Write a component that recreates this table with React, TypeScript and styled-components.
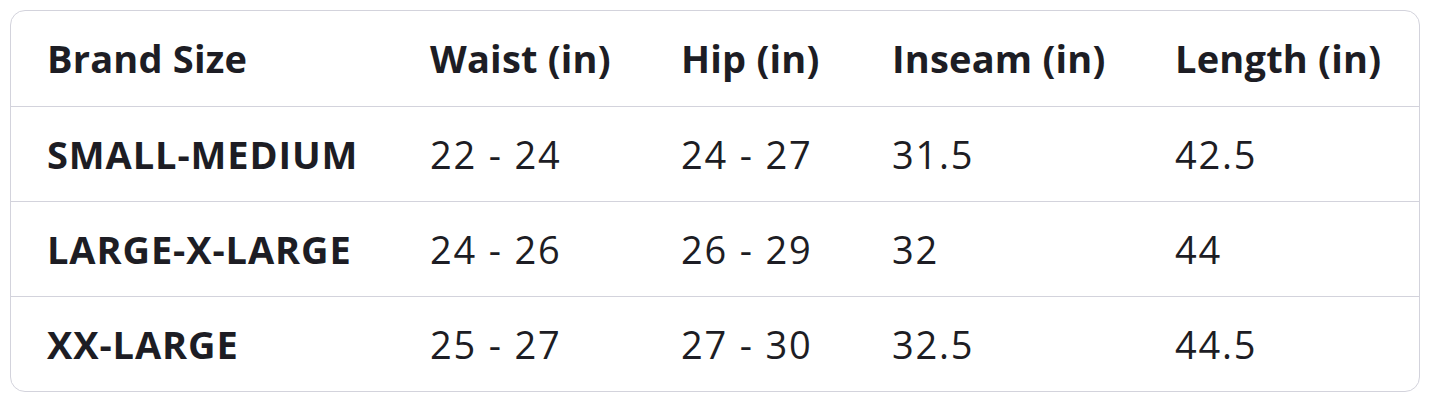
import styled, { createGlobalStyle } from "styled-components"

const GlobalStyle = createGlobalStyle`
    html, body {
        margin: 0;
        padding: 0;
        background: #ffffff;
    }
    body {
        font-family: "Open Sans", "Noto Sans", sans-serif;
        color: #1d1d24;
    }
`

const Page = styled.div`
    padding: 10px 25px 0 10px;
`

const Frame = styled.div`
    width: 1408px;
    border: 1.5px solid #d3d3dc;
    border-radius: 15px;
    overflow: hidden;
    background: #ffffff;
`

const Table = styled.table`
    width: 100%;
    border-collapse: collapse;
    table-layout: fixed;
`

const Row = styled.tr<{ $last?: boolean }>`
    height: 95px;
    border-bottom: ${(p) => (p.$last ? "none" : "1.5px solid #d3d3dc")};
`

const HeadCell = styled.th<{ $w: number }>`
    box-sizing: border-box;
    width: ${(p) => p.$w}px;
    padding: 0 0 0 36px;
    text-align: left;
    font-size: 38px;
    font-weight: 700;
    letter-spacing: 0.2px;
    white-space: nowrap;
`

const Cell = styled.td<{ $strong?: boolean }>`
    box-sizing: border-box;
    padding: 0 0 0 36px;
    text-align: left;
    font-size: 38px;
    font-weight: ${(p) => (p.$strong ? 700 : 400)};
    letter-spacing: ${(p) => (p.$strong ? "0.9px" : "1.8px")};
    white-space: nowrap;
`

const columns = [
    { label: "Brand Size", w: 383 },
    { label: "Waist (in)", w: 251 },
    { label: "Hip (in)", w: 211 },
    { label: "Inseam (in)", w: 283 },
    { label: "Length (in)", w: 280 },
]

const rows = [
    ["SMALL-MEDIUM", "22 - 24", "24 - 27", "31.5", "42.5"],
    ["LARGE-X-LARGE", "24 - 26", "26 - 29", "32", "44"],
    ["XX-LARGE", "25 - 27", "27 - 30", "32.5", "44.5"],
]

export default function App() {
    return (
        <>
            <GlobalStyle />
            <Page>
                <Frame>
                    <Table>
                        <thead>
                            <Row>
                                {columns.map((c) => (
                                    <HeadCell key={c.label} $w={c.w}>{c.label}</HeadCell>
                                ))}
                            </Row>
                        </thead>
                        <tbody>
                            {rows.map((r, i) => (
                                <Row key={r[0]} $last={i === rows.length - 1}>
                                    {r.map((v, j) => (
                                        <Cell key={j} $strong={j === 0}>{v}</Cell>
                                    ))}
                                </Row>
                            ))}
                        </tbody>
                    </Table>
                </Frame>
            </Page>
        </>
    )
}
